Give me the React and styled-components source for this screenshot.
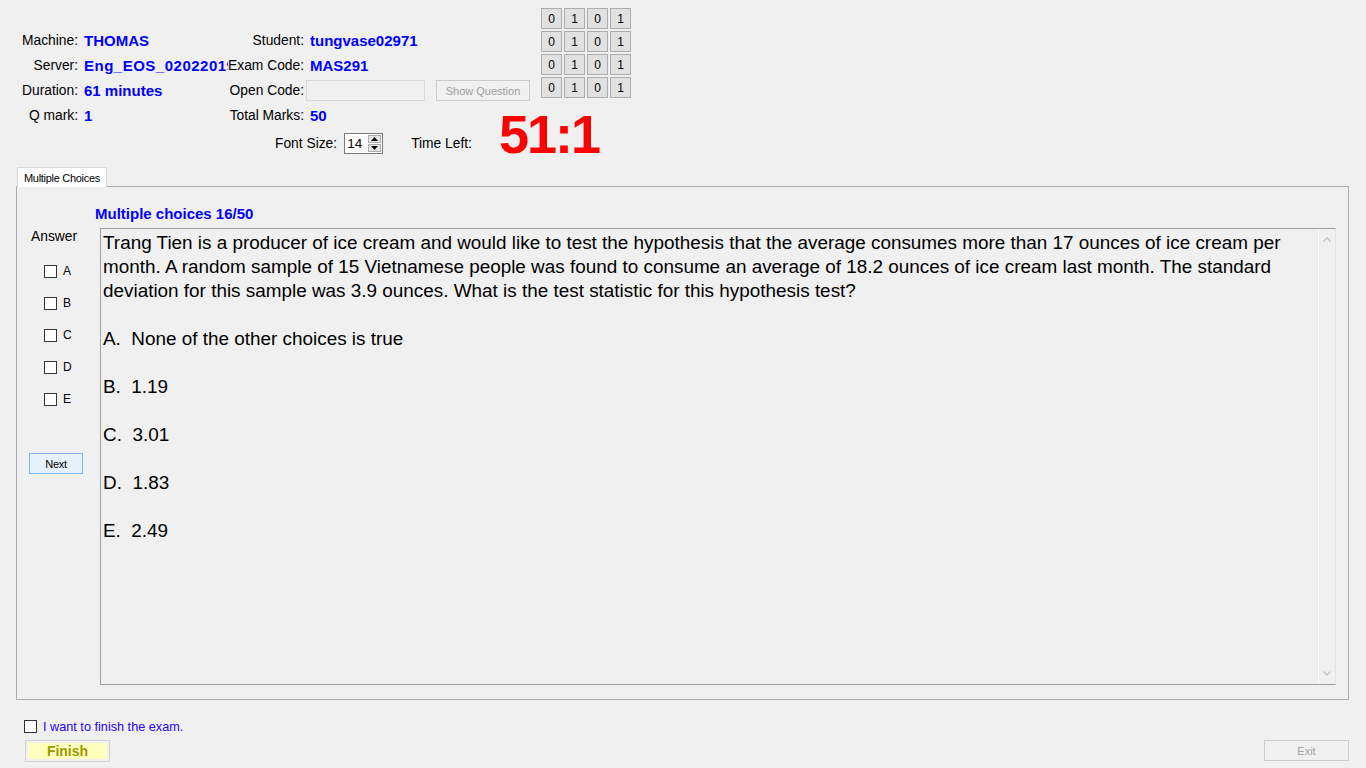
import styled, { createGlobalStyle } from 'styled-components';

const GlobalStyle = createGlobalStyle`
  html, body {
    margin: 0;
    padding: 0;
    background: #f0f0f0;
    height: 768px;
    overflow: hidden;
  }
  body {
    font-family: "Liberation Sans", Arial, sans-serif;
    color: #000;
  }
  * {
    box-sizing: border-box;
  }
`;

const Page = styled.div`
  width: 1366px;
  height: 768px;
  display: flex;
  flex-direction: column;

  & > * {
    flex-shrink: 0;
  }
`;

const Header = styled.div`
  display: flex;
  align-items: flex-start;
  height: 128px;
`;

const InfoGrid = styled.div`
  display: grid;
  grid-template-columns: 81px 147px 78px 225px;
  grid-auto-rows: 25px;
  padding-top: 28px;
  align-items: center;
`;

const Label = styled.div`
  font-size: 13.8px;
  text-align: right;
  padding-right: ${p => p.$pad ?? 3}px;
  white-space: nowrap;
`;

const Value = styled.div`
  font-size: 15px;
  font-weight: bold;
  color: #0000ff;
  padding-left: ${p => p.$pad ?? 3}px;
  white-space: nowrap;
  overflow: hidden;
  letter-spacing: ${p => p.$ls || 0}px;
`;

const OpenCodeCell = styled.div`
  display: flex;
  align-items: center;
`;

const OpenCodeInput = styled.div`
  width: 119px;
  height: 21px;
  border: 1px solid #d9d9d9;
  background: #f0f0f0;
`;

const DisabledButton = styled.div`
  width: ${p => p.$w}px;
  height: ${p => p.$h}px;
  margin-left: ${p => p.$ml || 0}px;
  border: 1px solid #cccccc;
  background: #f0f0f0;
  color: #a0a0a0;
  font-size: 11px;
  display: flex;
  align-items: center;
  justify-content: center;
`;

const BinaryGrid = styled.div`
  display: grid;
  grid-template-columns: repeat(4, 21px);
  grid-auto-rows: 21px;
  gap: 2px;
  margin-left: 10px;
  margin-top: 8px;
`;

const BitButton = styled.div`
  border: 1px solid #adadad;
  background: #e1e1e1;
  font-size: 12px;
  display: flex;
  align-items: center;
  justify-content: center;
`;

const ControlRow = styled.div`
  display: flex;
  align-items: center;
  height: 30px;
  padding-left: 275px;
`;

const Spinner = styled.div`
  display: flex;
  width: 39px;
  height: 21px;
  margin-left: 7px;
  border: 1px solid #7a7a7a;
  background: #fff;
`;

const SpinValue = styled.div`
  flex: 1;
  font-size: 13.5px;
  padding-left: 2px;
  line-height: 19px;
`;

const SpinButtons = styled.div`
  width: 15px;
  display: flex;
  flex-direction: column;
  padding: 1px;
  gap: 1px;
`;

const SpinArrow = styled.div`
  flex: 1;
  background: #e5e5e5;
  border: 1px solid #adadad;
  display: flex;
  align-items: center;
  justify-content: center;
`;

const TimeLabel = styled(Label)`
  margin-left: 28px;
  padding-right: 0;
`;

const Timer = styled.div`
  align-self: flex-start;
  margin-left: 27px;
  font-size: 54px;
  font-weight: bold;
  letter-spacing: -2px;
  color: #ff0000;
  line-height: 13px;
  height: 13px;
`;

const TabArea = styled.div`
  margin-top: 9px;
  margin-left: 16px;
  width: 1333px;
  display: flex;
  flex-direction: column;
`;

const TabHeader = styled.div`
  align-self: flex-start;
  margin-left: 1px;
  margin-bottom: -1px;
  position: relative;
  z-index: 1;
  height: 20px;
  padding: 0 6px;
  border: 1px solid #d9d9d9;
  border-bottom: none;
  background: #ffffff;
  font-size: 11px;
  letter-spacing: -0.3px;
  display: flex;
  align-items: center;
`;

const TabPanel = styled.div`
  height: 514px;
  border: 1px solid #adadad;
  display: grid;
  grid-template-columns: 83px 1fr;
  grid-template-rows: 41px 1fr;
  padding: 0 12px 14px 0;
`;

const QuestionTitle = styled.div`
  grid-column: 1 / 3;
  align-self: end;
  padding-left: 78px;
  margin-bottom: 6px;
  font-size: 15px;
  font-weight: bold;
  color: #0000ff;
  line-height: 17px;
`;

const AnswerColumn = styled.div`
  display: flex;
  flex-direction: column;
`;

const AnswerLabel = styled.div`
  font-size: 13.8px;
  line-height: 18px;
  padding-left: 14px;
`;

const OptionList = styled.div`
  margin-top: 9px;
  padding-left: 27px;
  display: flex;
  flex-direction: column;
`;

const OptionRow = styled.div`
  height: 32px;
  display: flex;
  align-items: center;
  gap: 6px;
  font-size: 12px;
`;

const CheckBox = styled.div`
  width: 13px;
  height: 13px;
  border: 1px solid #333333;
  background: #ffffff;
  flex: none;
`;

const NextButton = styled.div`
  margin-top: 38px;
  margin-left: 12px;
  width: 54px;
  height: 21px;
  border: 1px solid #7eb4ea;
  background: #e5f1fb;
  font-size: 11px;
  letter-spacing: -0.3px;
  display: flex;
  align-items: center;
  justify-content: center;
`;

const QuestionBox = styled.div`
  display: flex;
  border: 1px solid #a0a0a0;
  border-right-color: #e3e3e3;
  min-height: 0;
`;

const QuestionText = styled.div`
  flex: 1;
  padding: 2px 2px 0 2px;
  font-size: 18.9px;
  line-height: 24px;
`;

const Para = styled.p`
  margin: 0 0 24px 0;
`;

const ScrollBar = styled.div`
  width: 17px;
  border-left: 1px solid #ffffff;
  display: flex;
  flex-direction: column;
  justify-content: space-between;
  align-items: center;
  padding: 8px 0 8px;
`;

const FinishRow = styled.div`
  margin-top: 20px;
  padding-left: 24px;
  display: flex;
  align-items: center;
  gap: 6px;
  height: 13px;
`;

const FinishText = styled.span`
  font-size: 12.7px;
  color: #2a00ff;
`;

const ButtonRow = styled.div`
  margin-top: 7px;
  display: flex;
  justify-content: space-between;
  align-items: flex-start;
  padding: 0 17px 0 25px;
`;

const FinishButton = styled.div`
  width: 85px;
  height: 22px;
  border: 1px solid #d4d4d4;
  padding: 2px;
  display: flex;
`;

const FinishFill = styled.div`
  flex: 1;
  background: #ffffc0;
  color: #9c9a00;
  font-size: 14px;
  font-weight: bold;
  display: flex;
  align-items: center;
  justify-content: center;
`;

const bits = [0, 1, 0, 1];

function Chevron({ up }) {
  return (
    <svg width="8" height="5" viewBox="0 0 8 5">
      <path
        d={up ? 'M0.5 4.5 L4 1 L7.5 4.5' : 'M0.5 0.5 L4 4 L7.5 0.5'}
        fill="none"
        stroke="#c2c2c2"
        strokeWidth="1.3"
      />
    </svg>
  );
}

function SmallArrow({ up }) {
  return (
    <svg width="7" height="4" viewBox="0 0 7 4">
      <path d={up ? 'M0 4 L3.5 0 L7 4 Z' : 'M0 0 L3.5 4 L7 0 Z'} fill="#000" />
    </svg>
  );
}

function App() {
  return (
    <Page>
      <GlobalStyle />
      <Header>
        <InfoGrid>
          <Label>Machine:</Label>
          <Value>THOMAS</Value>
          <Label $pad={2}>Student:</Label>
          <Value $pad={4}>tungvase02971</Value>

          <Label>Server:</Label>
          <Value $ls={0.5}>Eng_EOS_02022019</Value>
          <Label $pad={2}>Exam Code:</Label>
          <Value $pad={4}>MAS291</Value>

          <Label>Duration:</Label>
          <Value>61 minutes</Value>
          <Label $pad={2}>Open Code:</Label>
          <OpenCodeCell>
            <OpenCodeInput />
            <DisabledButton $w={94} $h={21} $ml={11}>Show Question</DisabledButton>
          </OpenCodeCell>

          <Label>Q mark:</Label>
          <Value>1</Value>
          <Label $pad={2}>Total Marks:</Label>
          <Value $pad={4}>50</Value>
        </InfoGrid>
        <BinaryGrid>
          {[0, 1, 2, 3].map(r =>
            bits.map((b, i) => <BitButton key={`${r}-${i}`}>{b}</BitButton>)
          )}
        </BinaryGrid>
      </Header>

      <ControlRow>
        <Label $pad={0}>Font Size:</Label>
        <Spinner>
          <SpinValue>14</SpinValue>
          <SpinButtons>
            <SpinArrow><SmallArrow up /></SpinArrow>
            <SpinArrow><SmallArrow /></SpinArrow>
          </SpinButtons>
        </Spinner>
        <TimeLabel>Time Left:</TimeLabel>
        <Timer>51:1</Timer>
      </ControlRow>

      <TabArea>
        <TabHeader>Multiple Choices</TabHeader>
        <TabPanel>
          <QuestionTitle>Multiple choices 16/50</QuestionTitle>
          <AnswerColumn>
            <AnswerLabel>Answer</AnswerLabel>
            <OptionList>
              {['A', 'B', 'C', 'D', 'E'].map(l => (
                <OptionRow key={l}>
                  <CheckBox />
                  <span>{l}</span>
                </OptionRow>
              ))}
            </OptionList>
            <NextButton>Next</NextButton>
          </AnswerColumn>
          <QuestionBox>
            <QuestionText>
              <Para>
                Trang Tien is a producer of ice cream and would like to test the hypothesis that the average consumes more than 17 ounces of ice cream per month. A random sample of 15 Vietnamese people was found to consume an average of 18.2 ounces of ice cream last month. The standard deviation for this sample was 3.9 ounces. What is the test statistic for this hypothesis test?
              </Para>
              <Para>A.&nbsp; None of the other choices is true</Para>
              <Para>B.&nbsp; 1.19</Para>
              <Para>C.&nbsp; 3.01</Para>
              <Para>D.&nbsp; 1.83</Para>
              <Para>E.&nbsp; 2.49</Para>
            </QuestionText>
            <ScrollBar>
              <Chevron up />
              <Chevron />
            </ScrollBar>
          </QuestionBox>
        </TabPanel>
      </TabArea>

      <FinishRow>
        <CheckBox />
        <FinishText>I want to finish the exam.</FinishText>
      </FinishRow>
      <ButtonRow>
        <FinishButton>
          <FinishFill>Finish</FinishFill>
        </FinishButton>
        <DisabledButton $w={85} $h={21}>Exit</DisabledButton>
      </ButtonRow>
    </Page>
  );
}

export default App;
